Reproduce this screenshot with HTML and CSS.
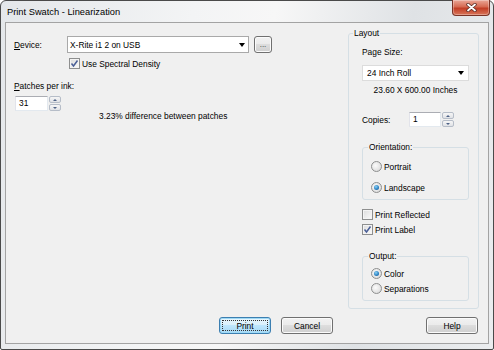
FILE: index.html
```html
<!DOCTYPE html>
<html>
<head>
  <title>Print Swatch - Linearization</title>
  <link rel="stylesheet" href="styles.css">
</head>
<body>

<div class="window">
  <div class="titlebar">
    <span class="title">Print Swatch - Linearization</span>
    <div class="close">
      <svg width="11" height="9" viewBox="0 0 11 9">
        <path d="M2 1.5 L9 7.5 M9 1.5 L2 7.5" stroke="#5a2a22" stroke-width="3.4" stroke-linecap="round"/>
        <path d="M2 1.5 L9 7.5 M9 1.5 L2 7.5" stroke="#fff" stroke-width="1.8" stroke-linecap="round"/>
      </svg>
    </div>
  </div>

  <div class="client">
    <div class="main">
      <div class="left">
        <div class="device-row">
          <span class="device-label"><u>D</u>evice:</span>
          <div class="combo device-combo"><span>X-Rite i1 2 on USB</span><span class="arrow"></span></div>
          <button class="btn more">...</button>
        </div>
        <div class="check spectral">
          <span class="box"><svg width="9" height="9" viewBox="0 0 9 9"><path d="M1.5 4.5 L3.5 7 L7.5 1.5" fill="none" stroke="#4a5f97" stroke-width="1.5"/></svg></span>
          <span>Use Spectral Density</span>
        </div>
        <div class="patches-label"><u>P</u>atches per ink:</div>
        <div class="spin patches-spin">
          <div class="spin-input">31</div>
          <div class="spin-btns"><span class="up"></span><span class="down"></span></div>
        </div>
        <div class="diff">3.23% difference between patches</div>
      </div>

      <div class="group layout">
        <div class="group-title">Layout</div>
        <div class="page-label">Page Size:</div>
        <div class="combo page-combo"><span>24 Inch Roll</span><span class="arrow"></span></div>
        <div class="dims">23.60 X 600.00 Inches</div>
        <div class="copies-row">
          <span class="copies-label">Copies:</span>
          <div class="spin copies-spin">
            <div class="spin-input">1</div>
            <div class="spin-btns"><span class="up"></span><span class="down"></span></div>
          </div>
        </div>

        <div class="group sub orientation">
          <div class="group-title">Orientation:</div>
          <div class="radio first"><span class="dot"></span><span>Portrait</span></div>
          <div class="radio second"><span class="dot on"></span><span>Landscape</span></div>
        </div>

        <div class="check reflected">
          <span class="box"></span>
          <span>Print Reflected</span>
        </div>
        <div class="check label-check">
          <span class="box"><svg width="9" height="9" viewBox="0 0 9 9"><path d="M1.5 4.5 L3.5 7 L7.5 1.5" fill="none" stroke="#4a5f97" stroke-width="1.5"/></svg></span>
          <span>Print Label</span>
        </div>

        <div class="group sub output">
          <div class="group-title">Output:</div>
          <div class="radio first"><span class="dot on"></span><span>Color</span></div>
          <div class="radio tight"><span class="dot"></span><span>Separations</span></div>
        </div>
      </div>
    </div>

    <div class="buttons">
      <button class="btn default"><span>Print</span></button>
      <button class="btn cancel">Cancel</button>
      <button class="btn help">Help</button>
    </div>
  </div>
</div>

</body>
</html>
```

FILE: styles.css
```css
body {
  margin: 0;
  font-family: "Liberation Sans", Arial, sans-serif;
  font-size: 8.4px;
  color: #000;
}

.window {
  width: 494px;
  height: 350px;
  box-sizing: border-box;
  border: 1px solid #4a4a4a;
  border-radius: 6px 6px 2px 2px;
  background: linear-gradient(100deg, #e4e7ea 0%, #f3f4f5 35%, #f7f7f7 50%, #dfe2e5 75%, #ebedef 100%);
  padding: 0 4px 5px;
  display: flex;
  flex-direction: column;
}

.titlebar {
  height: 21px;
  display: flex;
  align-items: center;
  padding-left: 2px;
}
.title {
  font-size: 9.3px;
  line-height: 12px;
}
.close {
  margin-left: auto;
  align-self: flex-start;
  margin-top: -1px;
  margin-right: -1px;
  width: 38px;
  height: 16px;
  box-sizing: border-box;
  border: 1px solid #7a3326;
  border-top: none;
  border-radius: 0 0 4px 4px;
  background: linear-gradient(#eaa797, #d66a52 45%, #c23d25 55%, #d8765a);
  box-shadow: inset 0 0 0 1px rgba(255,255,255,0.3);
  display: flex;
  align-items: center;
  justify-content: center;
}

.client {
  flex: 1;
  border: 1px solid #a3a3a3;
  background: #f0f0f0;
  display: flex;
  flex-direction: column;
}

.main {
  display: flex;
  align-items: flex-start;
}
.left {
  width: 342px;
  box-sizing: border-box;
  padding: 13px 0 0 8px;
}

.device-row {
  display: flex;
  align-items: center;
  height: 17px;
}
.device-label { width: 53px; }

.combo {
  display: flex;
  align-items: center;
  box-sizing: border-box;
  background: #fff;
  border: 1px solid #a9a9a9;
}
.combo .arrow {
  margin-left: auto;
  width: 0;
  height: 0;
  border-left: 3.5px solid transparent;
  border-right: 3.5px solid transparent;
  border-top: 4px solid #000;
}
.device-combo {
  width: 182px;
  height: 17px;
  margin-right: 5px;
  padding: 0 3px 0 2px;
}
.page-combo {
  height: 16px;
  margin-top: 6px;
  padding: 0 4px 0 4px;
  border-color: #dcdcdc;
}

.btn {
  font-family: inherit;
  font-size: 8.4px;
  color: #000;
  padding: 0;
  box-sizing: border-box;
  height: 17px;
  width: 52px;
  border: 1px solid #707070;
  border-radius: 3px;
  background: linear-gradient(#f2f2f2 0%, #ebebeb 45%, #dddddd 50%, #cfcfcf 100%);
  box-shadow: inset 0 0 0 1px #fbfbfb;
}
.more {
  width: 18px;
  font-size: 8px;
  line-height: 8px;
  color: #333;
}
.default {
  border-color: #3c7fb1;
  background: linear-gradient(#eaf6fd 0%, #d9f0fc 45%, #bee6fd 50%, #a7d9f5 100%);
  box-shadow: inset 0 0 0 1px #9fd9f5;
  display: flex;
  align-items: stretch;
  padding: 2px;
}
.default span {
  flex: 1;
  border: 1px dotted #333;
  display: flex;
  align-items: center;
  justify-content: center;
}

.check {
  display: flex;
  align-items: center;
  height: 13px;
  gap: 2px;
}
.box {
  width: 11px;
  height: 11px;
  box-sizing: border-box;
  border: 1px solid #8e8f8f;
  background: linear-gradient(135deg, #dcdcdc, #fbfbfb);
  box-shadow: inset 0 0 0 1px #f4f4f4;
  display: flex;
  align-items: center;
  justify-content: center;
}
.spectral {
  margin: 4px 0 0 55px;
}

.patches-label {
  margin-top: 10px;
  line-height: 13px;
}

.spin {
  display: flex;
  height: 15px;
}
.spin-input {
  box-sizing: border-box;
  background: #fff;
  border: 1px solid;
  border-color: #abadb3 #e3e9ef #e3e9ef #e2e3ea;
  padding-left: 3px;
  line-height: 13px;
}
.spin-btns {
  width: 12px;
  display: flex;
  flex-direction: column;
  gap: 1px;
  margin-left: 1px;
}
.spin-btns span {
  flex: 1;
  box-sizing: border-box;
  border: 1px solid #b6bdc8;
  border-radius: 2px;
  background: linear-gradient(#f6f6f6, #e0e2e6);
  display: flex;
  align-items: center;
  justify-content: center;
}
.spin-btns .up::after,
.spin-btns .down::after {
  content: "";
  width: 0;
  height: 0;
  border-left: 2px solid transparent;
  border-right: 2px solid transparent;
}
.spin-btns .up::after { border-bottom: 2px solid #4d6185; }
.spin-btns .down::after { border-top: 2px solid #4d6185; }

.patches-spin {
  margin: 3px 0 0 1px;
}
.patches-spin .spin-input { width: 33px; }

.diff {
  margin-left: 85px;
  line-height: 11px;
}

.group {
  box-sizing: border-box;
  border: 1px solid #d5dfe5;
  border-radius: 3px;
}
.group-title {
  display: table;
  margin-top: -7px;
  padding: 0 1px;
  background: #f0f0f0;
  line-height: 13px;
}

.layout {
  width: 131px;
  margin-top: 10px;
  padding: 0 9px 7px 13px;
}
.layout > .group-title { margin-left: -9px; }

.page-label {
  margin-top: 6px;
  line-height: 13px;
}
.dims {
  margin-top: 3px;
  line-height: 13px;
  text-align: center;
}
.copies-row {
  display: flex;
  align-items: center;
  margin-top: 15px;
}
.copies-label { width: 47px; }
.copies-spin .spin-input { width: 32px; }

.sub {
  width: 107px;
  padding: 0 0 5px 8px;
  margin-top: 20px;
}
.sub > .group-title { margin-left: -3px; }

.radio {
  display: flex;
  align-items: center;
  height: 13px;
  gap: 2px;
}
.radio.first { margin-top: 6px; }
.radio.second { margin-top: 8px; }
.output .radio.first { margin-top: 4px; }
.radio.tight { margin-top: 2px; }
.dot {
  width: 11px;
  height: 11px;
  box-sizing: border-box;
  border-radius: 50%;
  border: 1px solid #8e8f8f;
  background: radial-gradient(circle at 40% 40%, #fbfbfb 0%, #e4e4e4 60%, #d0d0d0 100%);
  display: flex;
  align-items: center;
  justify-content: center;
}
.dot.on::after {
  content: "";
  width: 5px;
  height: 5px;
  border-radius: 50%;
  background: radial-gradient(circle at 40% 35%, #8ad2f6 0%, #2f84c4 55%, #14528b 100%);
}

.reflected { margin-top: 8px; }
.label-check { margin-top: 2px; }

.buttons {
  display: flex;
  margin-top: 8px;
  padding: 0 10px 0 213px;
}
.cancel { margin-left: 10px; }
.help { margin-left: auto; }
```
